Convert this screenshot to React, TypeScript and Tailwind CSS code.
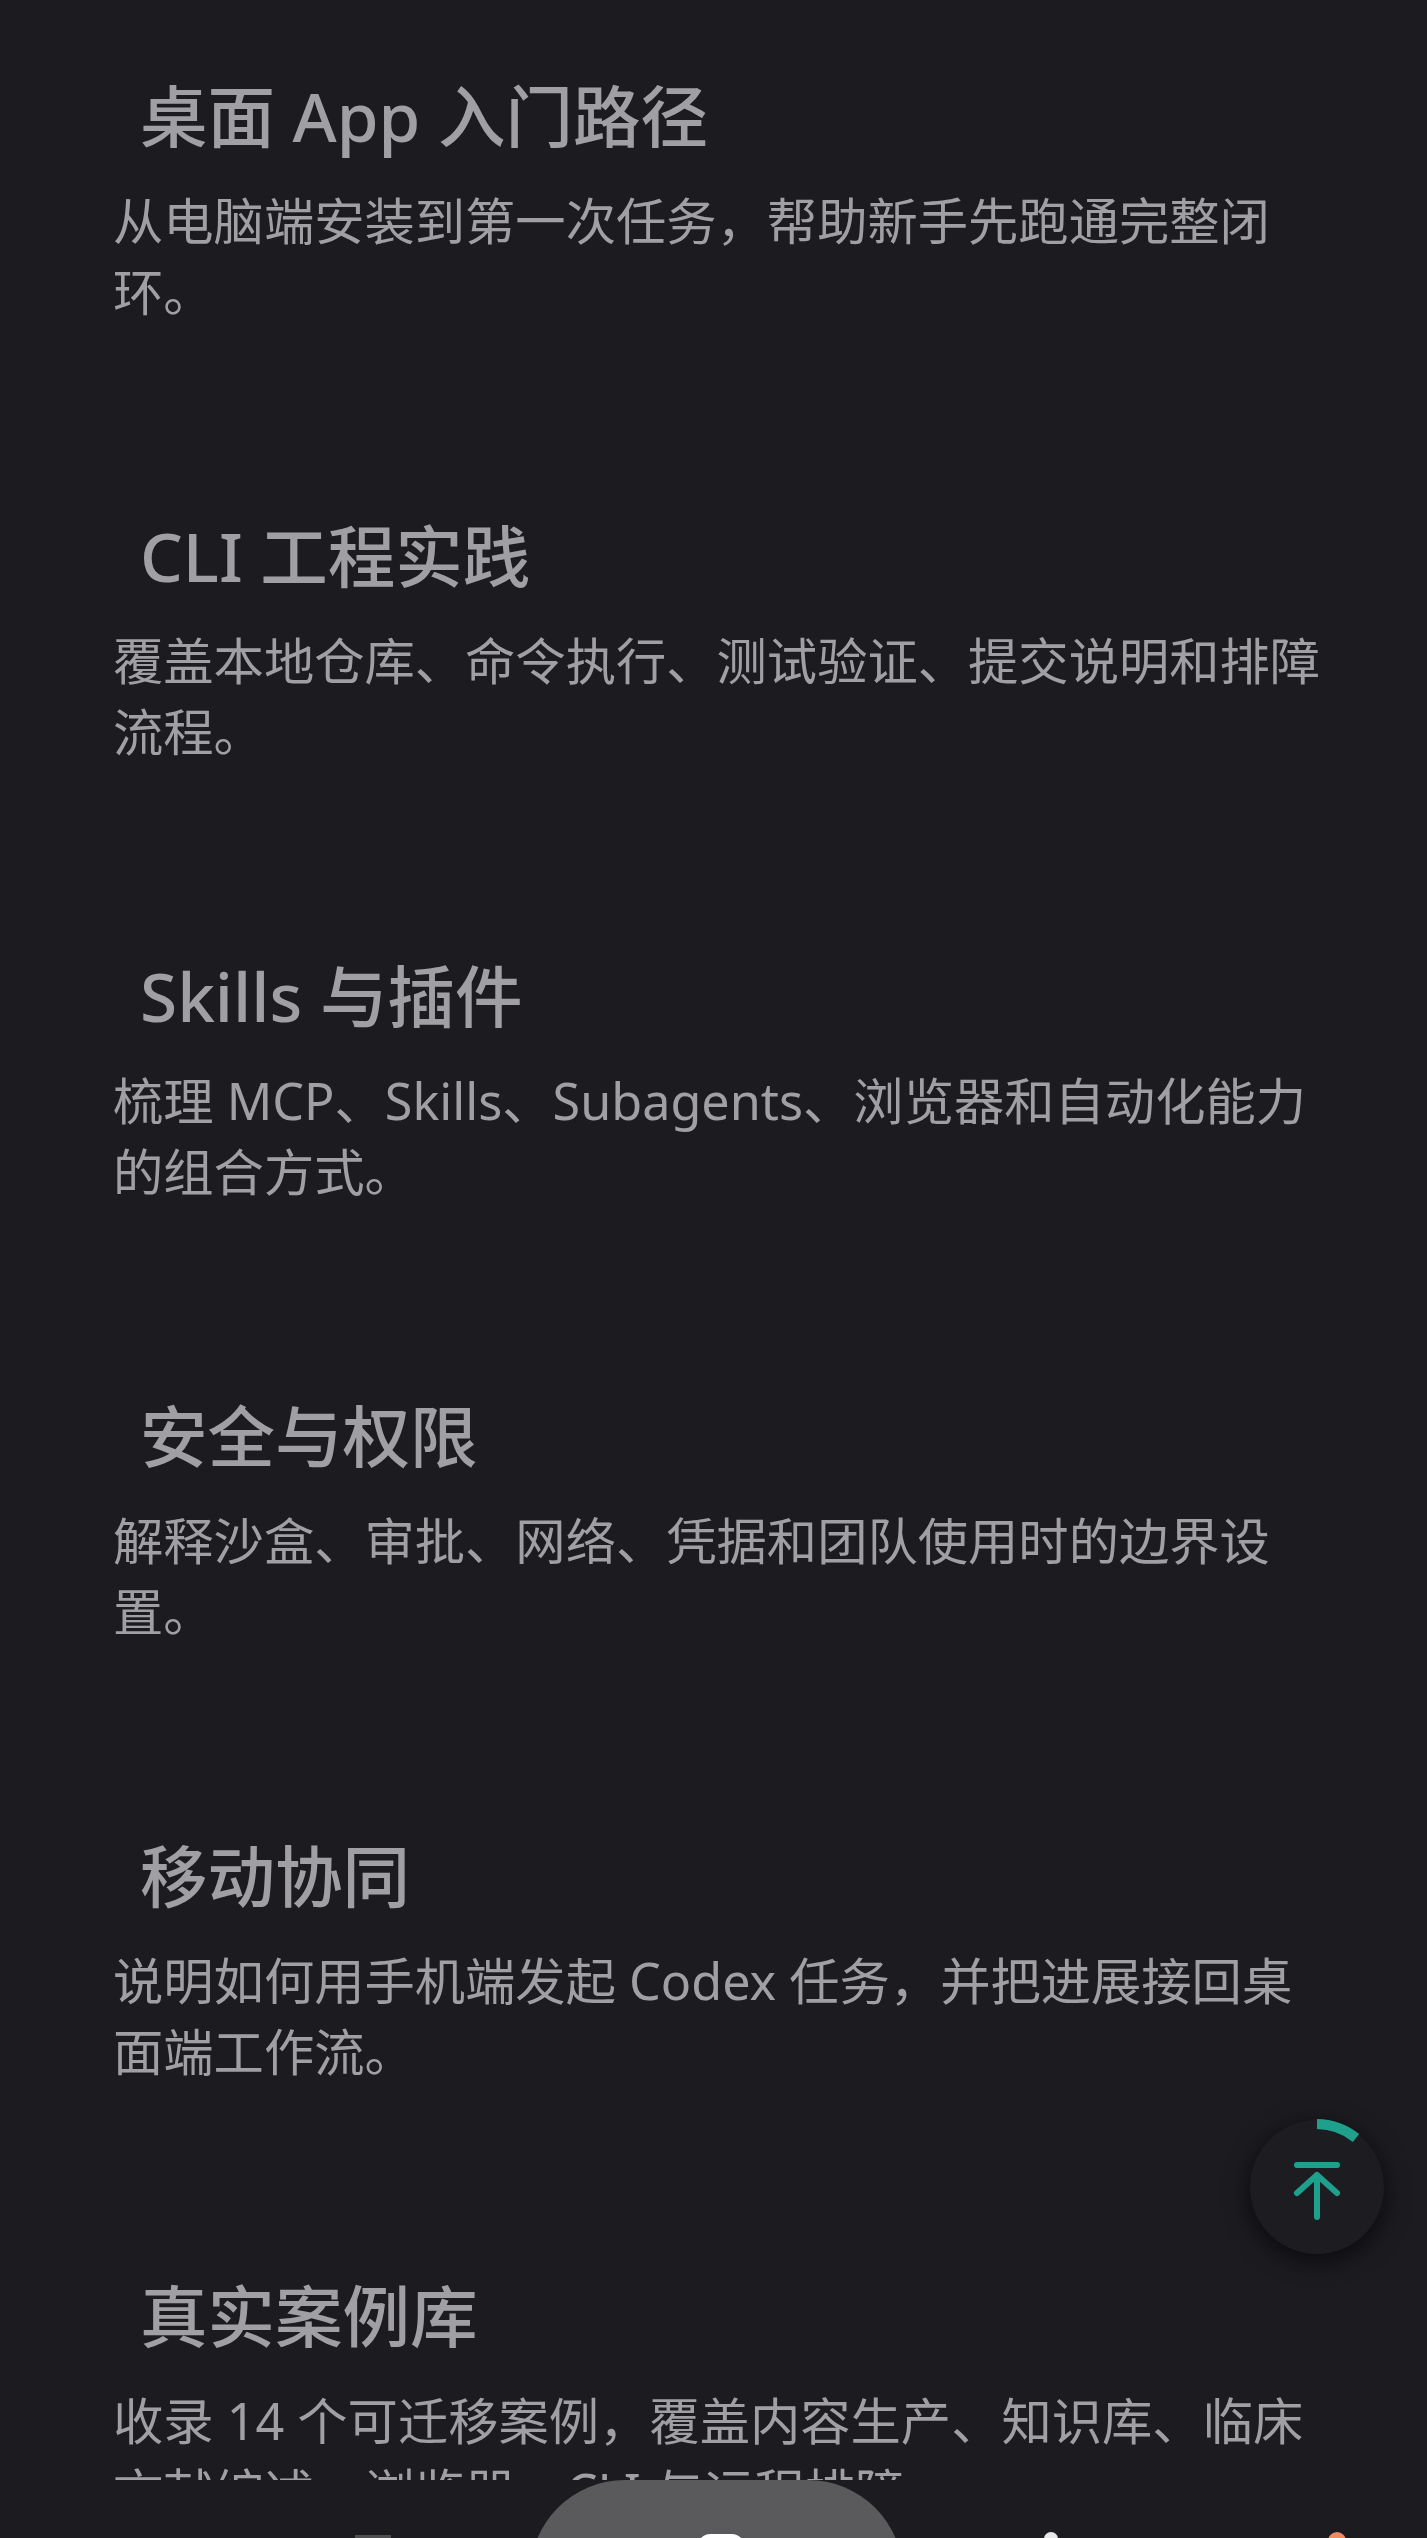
const sections = [
  { title: "桌面 App 入门路径", body: "从电脑端安装到第一次任务，帮助新手先跑通完整闭环。" },
  { title: "CLI 工程实践", body: "覆盖本地仓库、命令执行、测试验证、提交说明和排障流程。" },
  { title: "Skills 与插件", body: "梳理 MCP、Skills、Subagents、浏览器和自动化能力的组合方式。" },
  { title: "安全与权限", body: "解释沙盒、审批、网络、凭据和团队使用时的边界设置。" },
  { title: "移动协同", body: "说明如何用手机端发起 Codex 任务，并把进展接回桌面端工作流。" },
  { title: "真实案例库", body: "收录 14 个可迁移案例，覆盖内容生产、知识库、临床文献综述、浏览器、CLI 与远程排障。" },
];

function Section({ title, body }: { title: string; body: string }) {
  return (
    <section className="h-[440px]">
      <h3 className="pl-[27px] text-[67.5px] leading-[90px] font-medium text-[#a0a0a4]">{title}</h3>
      <p className="mt-[24px] text-[50.3px] leading-[71px] font-normal text-[#a0a0a4]">{body}</p>
    </section>
  );
}

// Back-to-top button with a reading progress ring
function BackToTop() {
  return (
    <button className="absolute right-[43px] top-[2120px] h-[134px] w-[134px] rounded-full bg-[#1d1d21] shadow-[0_6px_24px_rgba(0,0,0,0.6)]">
      <svg viewBox="0 0 134 134" className="absolute inset-0 h-full w-full overflow-visible" fill="none" stroke="#1fa08d" strokeLinecap="round">
        <path d="M67 4 A63 63 0 0 1 106 18" strokeWidth="10" strokeLinecap="butt" />
        <path d="M47 45 H87 M47 73 L67 55 L87 73 M67 55 V97" strokeWidth="6" strokeLinejoin="round" />
      </svg>
    </button>
  );
}

export default function App() {
  return (
    <div className="relative flex h-[2538px] w-[1427px] flex-col overflow-hidden bg-[#1b1b20] [font-family:'Noto_Sans','Noto_Sans_CJK_SC',sans-serif]">
      <main className="h-[2480px] shrink-0 overflow-hidden pl-[113px] pr-[100px] pt-[71px]">
        {sections.map((s) => (
          <Section key={s.title} title={s.title} body={s.body} />
        ))}
      </main>
      {/* Bottom tab bar: only the top edge of its icons is on screen */}
      <nav className="flex h-[58px] shrink-0 items-start">
        <div className="flex w-[530px] justify-center pl-[216px] pt-[55px]">
          <span className="h-[3px] w-[36px] bg-[#4f4f52]" />
        </div>
        <div className="flex h-[120px] w-[373px] justify-center rounded-t-[95px] bg-[#5a5a5c] pl-[8px] pt-[54px]">
          <span className="h-[20px] w-[46px] rounded-t-[12px] bg-white" />
        </div>
        <div className="flex flex-1 items-start gap-[270px] pl-[141px] pt-[52px]">
          <span className="h-[16px] w-[14px] rounded-full bg-[#e8e8ea]" />
          <span className="h-[20px] w-[18px] rounded-full bg-[#f08a62]" />
        </div>
      </nav>
      <BackToTop />
    </div>
  );
}
